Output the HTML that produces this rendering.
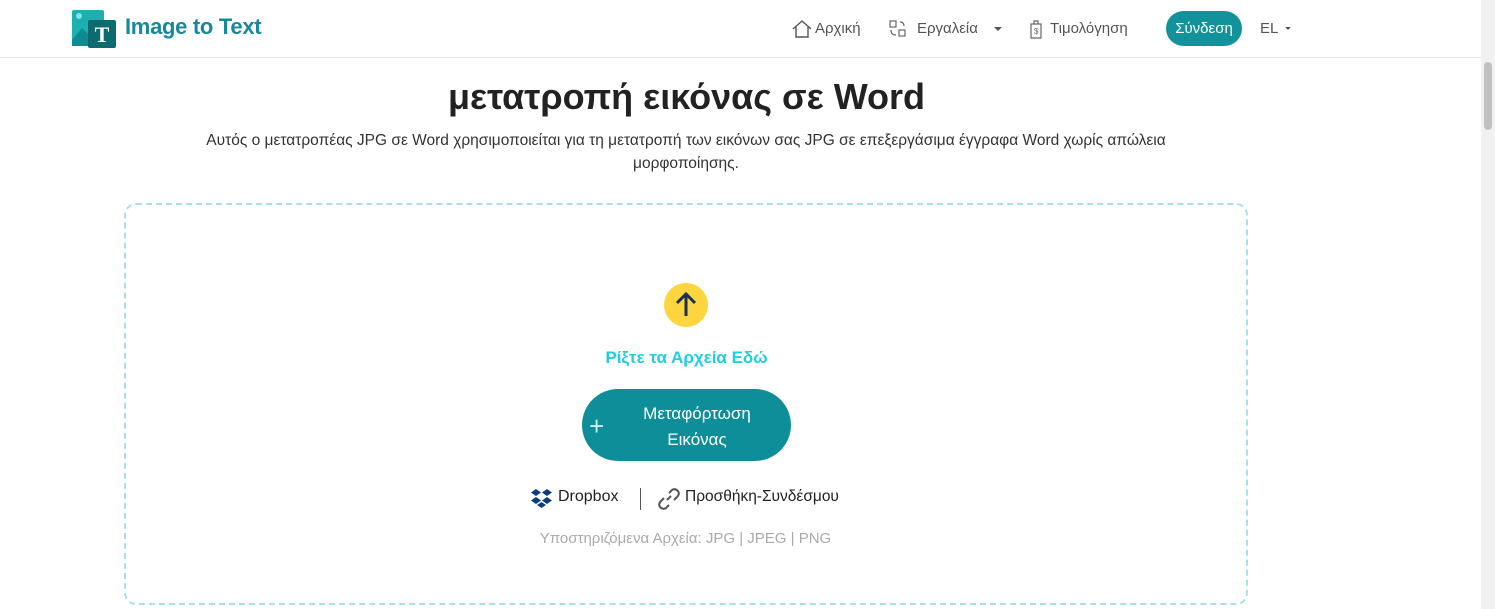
<!DOCTYPE html>
<html><head><meta charset="utf-8"><style>
*{margin:0;padding:0;box-sizing:border-box}
body{width:1495px;height:609px;overflow:hidden;background:#fff;font-family:"Liberation Sans",sans-serif;position:relative}
.hdr{position:absolute;left:0;top:0;width:1481px;height:58px;border-bottom:1px solid #e6e6e6}
.sb{position:absolute;right:0;top:0;width:14px;height:609px;background:#f1f1f1}
.sb div{position:absolute;left:3px;top:62px;width:8px;height:68px;background:#c1c1c1;border-radius:4px}
.nav{position:absolute;top:20px;font-size:15px;color:#555}
.abs{position:absolute}
</style></head><body>
<div class="hdr">
 <svg class="abs" style="left:72px;top:10px" width="46" height="38">
  <rect x="0" y="0" width="32" height="36" rx="2" fill="#1cb0b0"/>
  <path d="M0 30 L10 18 L18 26 L24 20 L32 28 V36 H0Z" fill="#0e8c8f"/>
  <circle cx="7" cy="6" r="3" fill="#7ee6e6"/>
  <rect x="16" y="10" width="28" height="28" rx="2" fill="#0d6b70"/>
  <text x="30" y="32" text-anchor="middle" font-family="Liberation Serif" font-weight="bold" font-size="22" fill="#fff">T</text>
 </svg>
 <div class="abs" style="left:125px;top:14px;font-size:22px;font-weight:bold;color:#168a99;letter-spacing:-0.3px">Image to Text</div>
 <svg class="abs" style="left:792px;top:20px" width="20" height="18" fill="none" stroke="#555" stroke-width="1.4"><path d="M1 9 L10 1 L19 9 M4 7 V17 H16 V7"/></svg>
 <div class="nav" style="left:815px">Αρχική</div>
 <svg class="abs" style="left:889px;top:20px" width="18" height="18" fill="none" stroke="#666" stroke-width="1.2"><rect x="1" y="1" width="6" height="6"/><rect x="10" y="10" width="6" height="6"/><path d="M11 2 Q15 2 15 6 M2 10 Q2 15 7 15"/></svg>
 <div class="nav" style="left:917px">Εργαλεία</div>
 <div class="abs" style="left:994px;top:27px;border:4px solid transparent;border-top-color:#555;border-bottom:0"></div>
 <svg class="abs" style="left:1028px;top:19px" width="16" height="20" fill="none" stroke="#666" stroke-width="1.2"><path d="M3 5 H13 V19 H3Z M6 5 V2 H10 V5"/><text x="6" y="15" font-size="8" fill="#666" stroke="none">$</text></svg>
 <div class="nav" style="left:1050px">Τιμολόγηση</div>
 <div class="abs" style="left:1166px;top:11px;width:76px;height:35px;border-radius:18px;background:#12939c;color:#fff;font-size:15px;line-height:35px;text-align:center">Σύνδεση</div>
 <div class="nav" style="left:1260px">EL</div>
 <div class="abs" style="left:1285px;top:27px;border:3.5px solid transparent;border-top-color:#555;border-bottom:0"></div>
</div>
<div class="sb"><div></div></div>
<div class="abs" style="left:0;width:1373px;top:76px;text-align:center;font-size:36px;font-weight:bold;color:#222">μετατροπή εικόνας σε Word</div>
<div class="abs" style="left:190px;width:992px;top:129px;text-align:center;font-size:15.5px;line-height:23px;color:#333">Αυτός ο μετατροπέας JPG σε Word χρησιμοποιείται για τη μετατροπή των εικόνων σας JPG σε επεξεργάσιμα έγγραφα Word χωρίς απώλεια μορφοποίησης.</div>
<div class="abs" style="left:124px;top:203px;width:1124px;height:402px;border:2px dashed #a7e0ec;border-radius:12px"></div>
<svg class="abs" style="left:664px;top:283px" width="44" height="44"><circle cx="22" cy="22" r="22" fill="#fcd53f"/><path d="M22 33 V12 M13 20 L22 11 L31 20" stroke="#1a3050" stroke-width="3" fill="none"/></svg>
<div class="abs" style="left:0;width:1373px;top:348px;text-align:center;font-size:17px;font-weight:bold;color:#1ecfe0">Ρίξτε τα Αρχεία Εδώ</div>
<div class="abs" style="left:582px;top:389px;width:209px;height:72px;border-radius:36px;background:#0e8e98;color:#fff"></div>
<div class="abs" style="left:589px;top:411px;font-size:26px;color:#cdeff2;font-weight:300">+</div>
<div class="abs" style="left:622px;top:401px;width:150px;text-align:center;font-size:17px;line-height:26px;color:#fff">Μεταφόρτωση Εικόνας</div>
<svg class="abs" style="left:531px;top:488px" width="22" height="20" fill="#0d3c80"><path d="M5 1 L10 4.5 L5 8 L0 4.5Z M16 1 L21 4.5 L16 8 L11 4.5Z M5 9 L10 12.5 L5 16 L0 12.5Z M16 9 L21 12.5 L16 16 L11 12.5Z M10.5 14 L15 17 L10.5 20 L6 17Z"/></svg>
<div class="abs" style="left:558px;top:488px;font-size:16px;color:#222">Dropbox</div>
<div class="abs" style="left:640px;top:488px;width:1px;height:22px;background:#555"></div>
<svg class="abs" style="left:657px;top:488px" width="24" height="22" fill="none" stroke="#555" stroke-width="2"><path d="M10 12 L14 8 M12 5 L15 2 Q18 0 21 3 Q23 6 20 9 L17 12 M12 17 L9 20 Q6 22 3 19 Q1 16 4 13 L7 10"/></svg>
<div class="abs" style="left:685px;top:488px;font-size:15.5px;color:#222">Προσθήκη-Συνδέσμου</div>
<div class="abs" style="left:0;width:1371px;top:530px;text-align:center;font-size:15px;color:#aaa">Υποστηριζόμενα Αρχεία: JPG | JPEG | PNG</div>
</body></html>
